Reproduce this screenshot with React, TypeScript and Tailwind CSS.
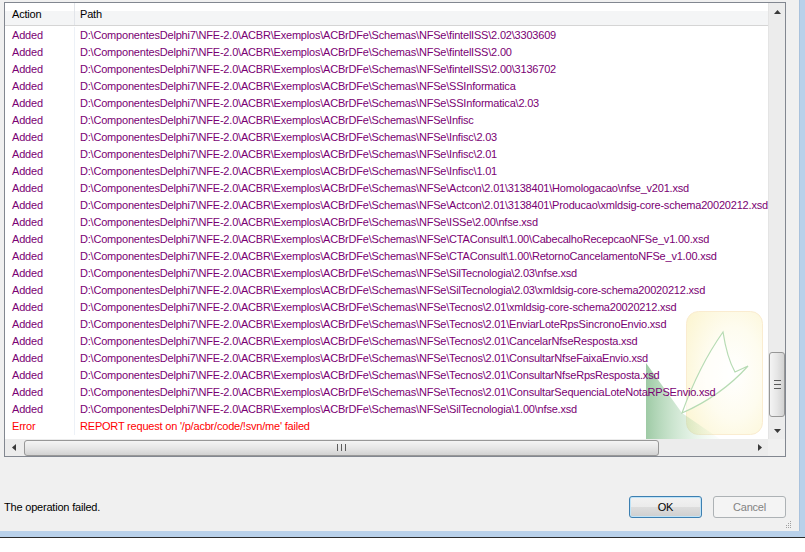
import React from 'react'

const BASE = 'D:\\ComponentesDelphi7\\NFE-2.0\\ACBR\\Exemplos\\ACBrDFe\\Schemas\\NFSe\\'

const rows: [string, string][] = [
  ['Added', BASE + 'fintelISS\\2.02\\3303609'],
  ['Added', BASE + 'fintelISS\\2.00'],
  ['Added', BASE + 'fintelISS\\2.00\\3136702'],
  ['Added', BASE + 'SSInformatica'],
  ['Added', BASE + 'SSInformatica\\2.03'],
  ['Added', BASE + 'Infisc'],
  ['Added', BASE + 'Infisc\\2.03'],
  ['Added', BASE + 'Infisc\\2.01'],
  ['Added', BASE + 'Infisc\\1.01'],
  ['Added', BASE + 'Actcon\\2.01\\3138401\\Homologacao\\nfse_v201.xsd'],
  ['Added', BASE + 'Actcon\\2.01\\3138401\\Producao\\xmldsig-core-schema20020212.xsd'],
  ['Added', BASE + 'ISSe\\2.00\\nfse.xsd'],
  ['Added', BASE + 'CTAConsult\\1.00\\CabecalhoRecepcaoNFSe_v1.00.xsd'],
  ['Added', BASE + 'CTAConsult\\1.00\\RetornoCancelamentoNFSe_v1.00.xsd'],
  ['Added', BASE + 'SilTecnologia\\2.03\\nfse.xsd'],
  ['Added', BASE + 'SilTecnologia\\2.03\\xmldsig-core-schema20020212.xsd'],
  ['Added', BASE + 'Tecnos\\2.01\\xmldsig-core-schema20020212.xsd'],
  ['Added', BASE + 'Tecnos\\2.01\\EnviarLoteRpsSincronoEnvio.xsd'],
  ['Added', BASE + 'Tecnos\\2.01\\CancelarNfseResposta.xsd'],
  ['Added', BASE + 'Tecnos\\2.01\\ConsultarNfseFaixaEnvio.xsd'],
  ['Added', BASE + 'Tecnos\\2.01\\ConsultarNfseRpsResposta.xsd'],
  ['Added', BASE + 'Tecnos\\2.01\\ConsultarSequenciaLoteNotaRPSEnvio.xsd'],
  ['Added', BASE + 'SilTecnologia\\1.00\\nfse.xsd'],
  ['Error', "REPORT request on '/p/acbr/code/!svn/me' failed"],
]

function Arrow({ dir }: { dir: 'up' | 'down' | 'left' | 'right' }) {
  const pts = {
    up: '0,4 7,4 3.5,0',
    down: '0,0 7,0 3.5,4',
    left: '4,0 4,7 0,3.5',
    right: '0,0 0,7 4,3.5',
  }[dir]
  const vertical = dir === 'up' || dir === 'down'
  return (
    <svg width={vertical ? 7 : 4} height={vertical ? 4 : 7} viewBox={vertical ? '0 0 7 4' : '0 0 4 7'}>
      <polygon points={pts} fill="#3a3a3a" />
    </svg>
  )
}

function Watermark() {
  // logo faded behind the last rows (page coords minus 641,306)
  return (
    <svg className="absolute left-[636px] top-[280px]" width="128" height="133" viewBox="0 0 128 133">
      <defs>
        <radialGradient id="wmBox" cx="0.62" cy="0.5" r="0.75">
          <stop offset="0" stopColor="#ffffff" />
          <stop offset="0.5" stopColor="#fefcef" />
          <stop offset="1" stopColor="#fcf5d2" />
        </radialGradient>
        <linearGradient id="wmGreen" x1="0" y1="0" x2="1" y2="0">
          <stop offset="0" stopColor="#4f9f5c" stopOpacity="0.55" />
          <stop offset="0.6" stopColor="#8cc894" stopOpacity="0.25" />
          <stop offset="1" stopColor="#bfe3c2" stopOpacity="0.05" />
        </linearGradient>
      </defs>
      <rect x="45.5" y="5.5" width="76" height="123" rx="12" fill="url(#wmBox)" stroke="#faecd0" />
      <polygon points="5,57 41,107 79,133 5,133" fill="url(#wmGreen)" />
      <path
        d="M41,107 Q58,60 82,26 Q86,52 94,66 L107,60 Q80,90 41,107 Z"
        fill="#ffffff"
        fillOpacity="0.6"
        stroke="#b6dbb3"
        strokeWidth="1.2"
      />
    </svg>
  )
}

export default function App() {
  return (
    <div className="w-[805px] h-[552px] bg-white overflow-hidden font-['Liberation_Sans',Arial,sans-serif] text-[11px] tracking-[-0.2px] text-black">
      <div className="h-[538px] bg-[#b9d1ea] border-b border-[#2b2b2b]">
        <div className="relative w-[800px] h-[531px] bg-[#f0f0f0] border-r border-[#a9c2dd] flex flex-col pt-[2px] pl-[4px]">
          {/* list view */}
          <div className="w-[782px] h-[455px] border border-[#828790] bg-white flex">
            <div className="w-[763px] flex flex-col">
              <div className="h-[23px] flex border-b border-[#d5d5d5] bg-[linear-gradient(to_bottom,#ffffff_0%,#ffffff_38%,#f4f5f6_38%,#f4f5f6_100%)]">
                <div className="w-[70px] pl-[7px] pt-[1px] flex items-center border-r border-[#e2e5ea]">Action</div>
                <div className="pl-[5px] pt-[1px] flex items-center">Path</div>
              </div>
              <div className="relative flex-1 overflow-hidden pt-[1px]">
                <Watermark />
                <div className="relative">
                  {rows.map(([action, path], i) => {
                    const color = action === 'Error' ? 'text-[#ff0000]' : 'text-[#7a0073]'
                    return (
                      <div key={i} className={`h-[17px] flex whitespace-nowrap ${color}`}>
                        <div className="w-[70px] shrink-0 pl-[7px] flex items-center border-r border-[#edf1f7]">{action}</div>
                        <div className="pl-[5px] flex items-center">{path}</div>
                      </div>
                    )
                  })}
                </div>
              </div>
              {/* horizontal scroll bar */}
              <div className="h-[17px] flex bg-[#ececec]">
                <div className="w-[17px] flex items-center justify-center">
                  <Arrow dir="left" />
                </div>
                <div className="flex-1 flex items-center pl-[2px]">
                  <div className="w-[635px] h-[16px] rounded-[3px] border border-[#979797] bg-[linear-gradient(to_bottom,#f4f4f4,#e6e6e6_50%,#d2d2d2)] flex items-center justify-center">
                    <div className="flex gap-[1px]">
                      <div className="w-[1px] h-[7px] bg-[#5c5c5c]" />
                      <div className="w-[1px] h-[7px] bg-[#e8e8e8]" />
                      <div className="w-[1px] h-[7px] bg-[#5c5c5c]" />
                      <div className="w-[1px] h-[7px] bg-[#e8e8e8]" />
                      <div className="w-[1px] h-[7px] bg-[#5c5c5c]" />
                    </div>
                  </div>
                </div>
                <div className="w-[17px] flex items-center justify-center">
                  <Arrow dir="right" />
                </div>
              </div>
            </div>
            {/* vertical scroll bar */}
            <div className="w-[17px] flex flex-col">
              <div className="flex-1 flex flex-col bg-[#ececec] border-l border-[#e4e4e4]">
                <div className="h-[17px] flex items-center justify-center">
                  <Arrow dir="up" />
                </div>
                <div className="flex-1 pt-[332px]">
                  <div className="h-[65px] rounded-[3px] border border-[#979797] bg-[linear-gradient(to_right,#f4f4f4,#e6e6e6_50%,#d2d2d2)] flex items-center justify-center">
                    <div className="flex flex-col gap-[1px]">
                      <div className="w-[7px] h-[1px] bg-[#5c5c5c]" />
                      <div className="w-[7px] h-[1px] bg-[#e8e8e8]" />
                      <div className="w-[7px] h-[1px] bg-[#5c5c5c]" />
                      <div className="w-[7px] h-[1px] bg-[#e8e8e8]" />
                      <div className="w-[7px] h-[1px] bg-[#5c5c5c]" />
                    </div>
                  </div>
                </div>
                <div className="h-[17px] flex items-center justify-center">
                  <Arrow dir="down" />
                </div>
              </div>
              <div className="h-[17px] bg-[#f0f0f0]" />
            </div>
          </div>

          {/* status and buttons */}
          <div className="mt-[39px] h-[22px] w-[782px] flex items-center justify-between">
            <div>The operation failed.</div>
            <div className="flex gap-[11px]">
              <button className="w-[73px] h-[22px] rounded-[3px] border border-[#3c7fb1] bg-[linear-gradient(to_bottom,#f2f2f2,#ebebeb_50%,#dddddd_50%,#cfcfcf)] shadow-[inset_0_0_0_1px_#bfe3f7] text-black">
                OK
              </button>
              <button className="w-[73px] h-[22px] rounded-[3px] border border-[#adb2b5] bg-[#f4f4f4] text-[#838383]">
                Cancel
              </button>
            </div>
          </div>

          {/* size grip */}
          <svg className="absolute right-[7px] bottom-[3px]" width="7" height="7" viewBox="0 0 7 7">
            <rect x="5" y="0" width="1" height="1" fill="#a0a0a0" />
            <rect x="3" y="2" width="1" height="1" fill="#a0a0a0" />
            <rect x="5" y="2" width="1" height="1" fill="#a0a0a0" />
            <rect x="1" y="4" width="1" height="1" fill="#a0a0a0" />
            <rect x="3" y="4" width="1" height="1" fill="#a0a0a0" />
            <rect x="5" y="4" width="1" height="1" fill="#a0a0a0" />
            <rect x="1" y="6" width="1" height="1" fill="#a0a0a0" />
            <rect x="3" y="6" width="1" height="1" fill="#a0a0a0" />
            <rect x="5" y="6" width="1" height="1" fill="#a0a0a0" />
          </svg>
        </div>
      </div>
    </div>
  )
}
